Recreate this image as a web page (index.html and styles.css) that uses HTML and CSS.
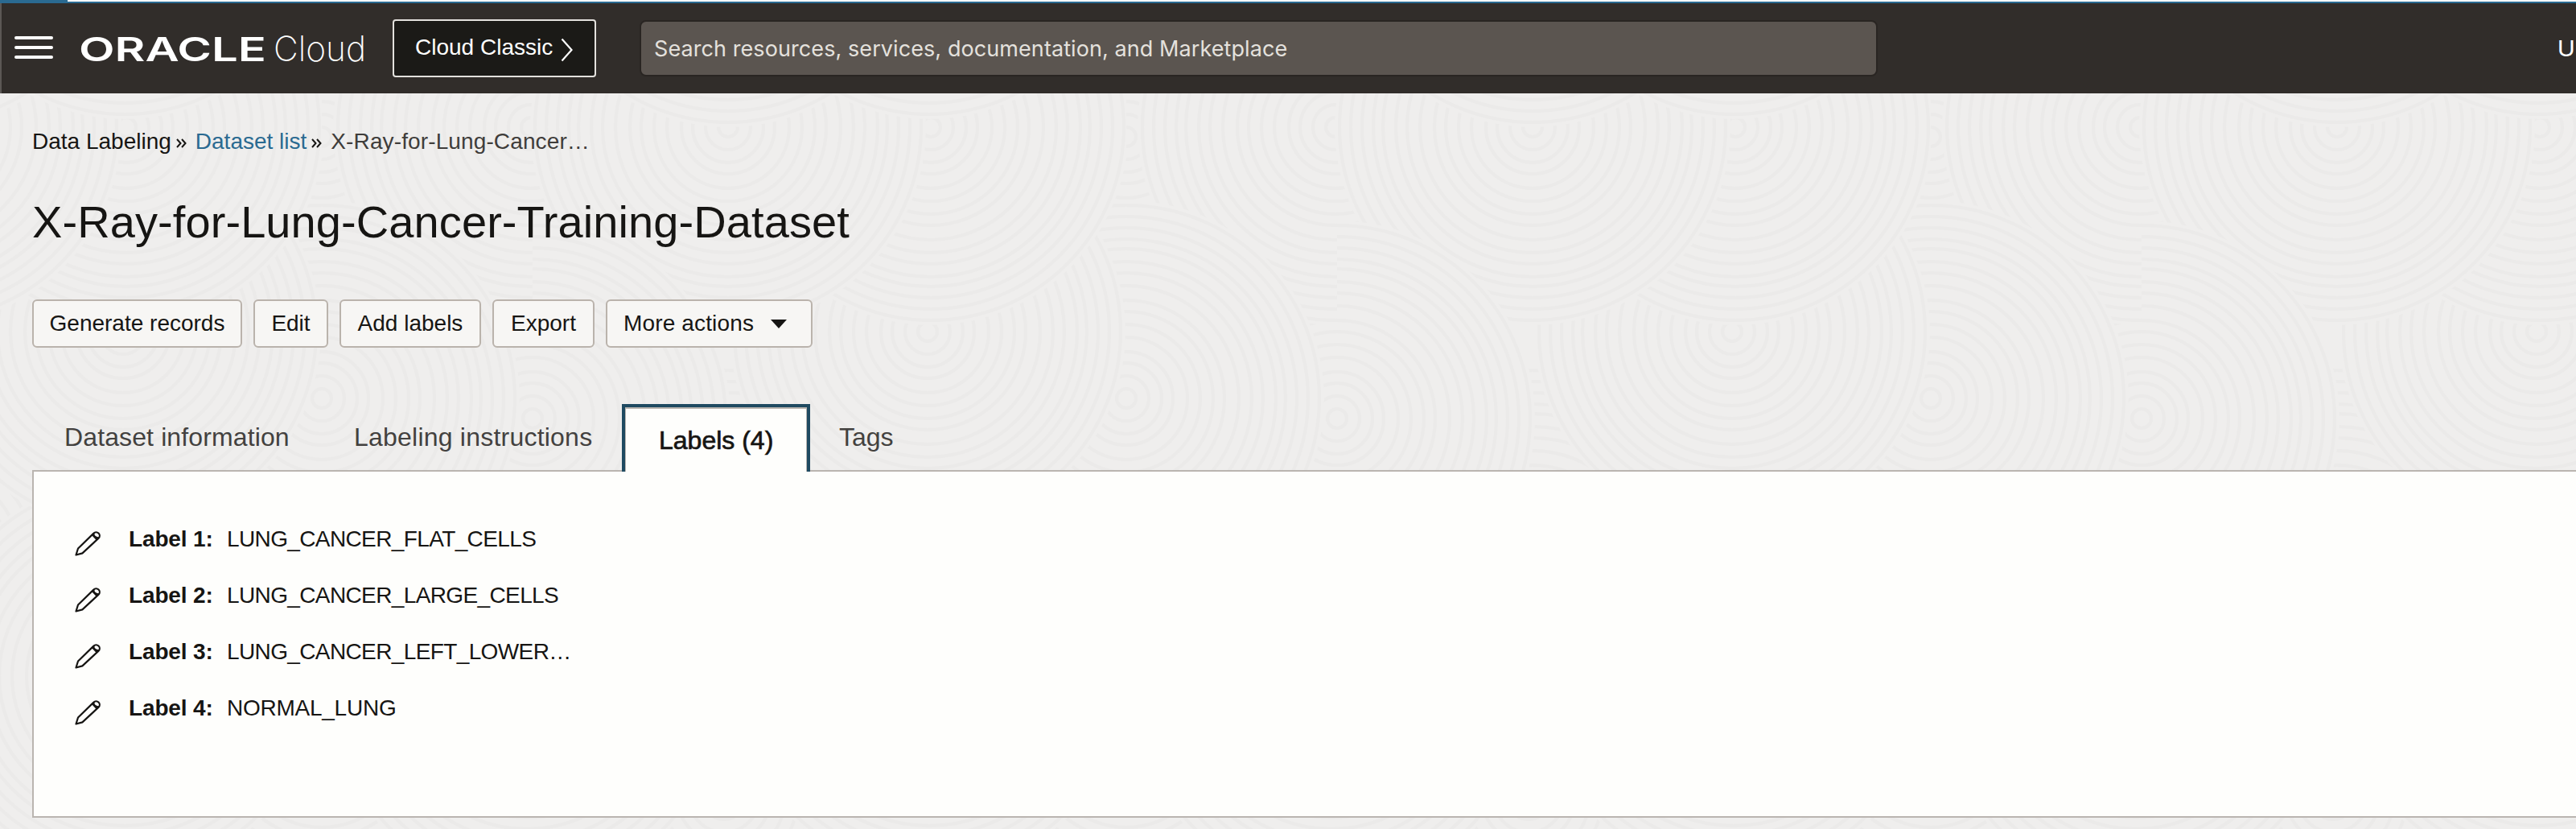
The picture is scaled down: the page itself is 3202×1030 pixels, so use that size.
FILE: index.html
```html
<!DOCTYPE html>
<html lang="en">
<head>
<meta charset="utf-8">
<title>X-Ray-for-Lung-Cancer-Training-Dataset</title>
<link rel="stylesheet" href="styles.css">
</head>
<body>
<svg class="texture" width="3202" height="1030" aria-hidden="true">
  <defs>
    <g id="rings">
      <circle r="246" fill="#efeeed"/>
      <g fill="none" stroke="#ebeae9" stroke-width="4">
        <circle r="12"/><circle r="28"/><circle r="44"/><circle r="58"/><circle r="76"/><circle r="92"/><circle r="108"/><circle r="122"/><circle r="140"/><circle r="156"/><circle r="170"/><circle r="186"/><circle r="198"/><circle r="212"/><circle r="226"/><circle r="240"/>
      </g>
    </g>
    <clipPath id="right"><rect x="0" y="-260" width="260" height="520"/></clipPath>
    <pattern id="sand" x="400" y="0" width="1000" height="1030" patternUnits="userSpaceOnUse">
      <rect width="1000" height="1030" fill="#efeeed"/>
      <use href="#rings" x="0" y="920"/><use href="#rings" x="1000" y="920"/>
      <use href="#rings" x="500" y="990"/>
      <use href="#rings" x="505" y="700"/>
      <use href="#rings" x="755" y="840"/>
      <use href="#rings" x="255" y="860"/>
      <use href="#rings" x="0" y="170"/><use href="#rings" x="1000" y="170"/>
      <use href="#rings" x="1000" y="495"/>
      <use href="#rings" x="753" y="412"/>
      <use href="#rings" x="757" y="158"/>
      <use href="#rings" x="262" y="520"/>
      <use href="#rings" x="260" y="158"/>
      <use href="#rings" x="505" y="158"/>
      <g transform="translate(262 520)"><use href="#rings" clip-path="url(#right)"/></g>
      <use href="#rings" x="0" y="495"/>
      <use href="#rings" x="505" y="-88"/>
      <use href="#rings" x="755" y="-98"/>
    </pattern>
  </defs>
  <rect width="3202" height="1030" fill="url(#sand)"/>
</svg>

<div class="progress"><div class="progress-done"></div></div>

<header class="topbar">
  <button class="menu" aria-label="Menu"><span></span><span></span><span></span></button>
  <svg class="brand" width="360" height="60" viewBox="0 0 360 60" role="img" aria-label="Oracle Cloud">
    <text class="brand-name" x="-2" y="44" textLength="233" lengthAdjust="spacingAndGlyphs">ORACLE</text>
    <text class="brand-product" x="240" y="44" textLength="115" lengthAdjust="spacingAndGlyphs">Cloud</text>
  </svg>
  <button class="classic">Cloud Classic
    <svg width="16" height="30" viewBox="0 0 16 30"><path d="M1.5 1.5 13.5 15 1.5 28.5" fill="none" stroke="#fff" stroke-width="2.2"/></svg>
  </button>
  <div class="search">Search resources, services, documentation, and Marketplace</div>
  <div class="region">U</div>
</header>

<main class="page">
  <nav class="crumbs">
    <span>Data Labeling</span>
    <svg class="sep" width="13" height="12" viewBox="0 0 13 12"><path d="M1 1l4.5 5L1 11M7 1l4.5 5L7 11"/></svg>
    <a>Dataset list</a>
    <svg class="sep" width="13" height="12" viewBox="0 0 13 12"><path d="M1 1l4.5 5L1 11M7 1l4.5 5L7 11"/></svg>
    <span class="current">X-Ray-for-Lung-Cancer…</span>
  </nav>

  <h1>X-Ray-for-Lung-Cancer-Training-Dataset</h1>

  <div class="actions">
    <button class="btn generate">Generate records</button>
    <button class="btn edit">Edit</button>
    <button class="btn add">Add labels</button>
    <button class="btn export">Export</button>
    <button class="btn more">More actions <span class="caret"></span></button>
  </div>

  <div class="tabs">
    <div class="tab info">Dataset information</div>
    <div class="tab instr">Labeling instructions</div>
    <div class="tab active"><span>Labels (4)</span></div>
    <div class="tab tags">Tags</div>
  </div>

  <section class="panel">
    <div class="row">
      <svg class="pencil" viewBox="0 0 32 32"><path d="M1.5 30.5 4 22.5 23.4 3.6A4.3 4.3 0 0 1 29.6 9.6L9.4 28.4Z"/><path d="M21.8 5.2 27.6 11.4M23.4 3.6Q22.6 8.4 29.6 9.6"/></svg>
      <b>Label 1:</b><span>LUNG_CANCER_FLAT_CELLS</span>
    </div>
    <div class="row">
      <svg class="pencil" viewBox="0 0 32 32"><path d="M1.5 30.5 4 22.5 23.4 3.6A4.3 4.3 0 0 1 29.6 9.6L9.4 28.4Z"/><path d="M21.8 5.2 27.6 11.4M23.4 3.6Q22.6 8.4 29.6 9.6"/></svg>
      <b>Label 2:</b><span>LUNG_CANCER_LARGE_CELLS</span>
    </div>
    <div class="row">
      <svg class="pencil" viewBox="0 0 32 32"><path d="M1.5 30.5 4 22.5 23.4 3.6A4.3 4.3 0 0 1 29.6 9.6L9.4 28.4Z"/><path d="M21.8 5.2 27.6 11.4M23.4 3.6Q22.6 8.4 29.6 9.6"/></svg>
      <b>Label 3:</b><span>LUNG_CANCER_LEFT_LOWER…</span>
    </div>
    <div class="row">
      <svg class="pencil" viewBox="0 0 32 32"><path d="M1.5 30.5 4 22.5 23.4 3.6A4.3 4.3 0 0 1 29.6 9.6L9.4 28.4Z"/><path d="M21.8 5.2 27.6 11.4M23.4 3.6Q22.6 8.4 29.6 9.6"/></svg>
      <b>Label 4:</b><span>NORMAL_LUNG</span>
    </div>
  </section>
</main>
</body>
</html>
```
FILE: styles.css
```css
* { box-sizing: border-box; }

body {
  margin: 0;
  width: 3202px;
  height: 1030px;
  overflow: hidden;
  background: #efeeed;
  color: #161513;
  font: 28px/32px "Liberation Sans", Arial, sans-serif;
}

button { margin: 0; font: inherit; color: inherit; white-space: nowrap; }

.texture { position: absolute; inset: 0; z-index: -1; }

.progress { height: 4px; background: #fff; border-bottom: 2px solid #2a6a91; }
.progress-done { width: 84px; height: 2px; background: #2a6a91; }

.topbar {
  display: flex;
  align-items: flex-start;
  height: 112px;
  background: #312d2a;
  border-left: 2px solid #5c5855;
  color: #fff;
}

.menu {
  display: flex;
  flex-direction: column;
  gap: 8px;
  width: 48px;
  margin: 41px 0 0 16px;
  padding: 0;
  border: 0;
  background: none;
}
.menu span { height: 4px; border-radius: 2px; background: #fff; }

.brand { margin: 28px 0 0 34px; fill: #fff; overflow: visible; }
.brand-name { font: 600 41px "Inter", sans-serif; }
.brand-product { font: 250 43px "Inter", sans-serif; }

.classic {
  display: flex;
  align-items: center;
  gap: 10px;
  width: 253px;
  height: 72px;
  margin: 20px 0 0 28px;
  padding: 0 0 2px 26px;
  border: 2px solid #e3e1dd;
  border-radius: 4px;
  background: #1b1a17;
}
.classic svg { margin-top: 5px; }

.search {
  width: 1539px;
  height: 70px;
  margin: 21px 0 0 54px;
  padding-left: 16px;
  border: 2px solid #292522;
  border-radius: 8px;
  background: #5b5550;
  color: #e4e1dd;
  font: 27px/68px "Inter", sans-serif;
  letter-spacing: 0.08px;
}

.region { margin: 38px 0 0 auto; width: 23px; font-size: 30px; line-height: 36px; }

.page { padding: 44px 0 0 40px; }

.crumbs { display: flex; align-items: center; height: 32px; }
.crumbs a { color: #2a6a91; }
.crumbs .current { color: #3f3d3b; letter-spacing: 0.12px; }
.sep { margin: 4px 11px 0 6px; fill: none; stroke: #161513; stroke-width: 2; }

h1 { margin: 52px 0 0; font-size: 56px; line-height: 64px; font-weight: 400; letter-spacing: 0.09px; }

.actions { display: flex; gap: 14px; margin-top: 64px; }
.btn {
  height: 60px;
  padding: 0;
  border: 2px solid #bab3ac;
  border-radius: 6px;
  background: #f7f6f4;
}
.generate { width: 261px; }
.edit { width: 93px; }
.add { width: 176px; }
.export { width: 127px; }
.more { display: flex; align-items: center; gap: 21px; width: 257px; padding-left: 20px; letter-spacing: 0.15px; }
.caret {
  border: 10px solid transparent;
  border-top: 11px solid #161513;
  border-bottom: 0;
}

.tabs {
  display: flex;
  position: relative;
  z-index: 1;
  height: 84px;
  margin-top: 70px;
  font-size: 32px;
  line-height: 82px;
  color: #43413f;
  white-space: nowrap;
}
.info { width: 360px; padding-left: 40px; letter-spacing: 0.12px; }
.instr { width: 373px; padding-left: 40px; letter-spacing: 0.22px; }
.active {
  width: 234px;
  height: 84px;
  border: 4px solid #1f4a61;
  border-bottom: 0;
  background: #fefefc;
  color: #161513;
  font-size: 32px;
  line-height: 79px;
  -webkit-text-stroke: 0.7px #161513;
}
.active span {
  display: block;
  height: 80px;
  padding-left: 41px;
  border: 2px solid #bab5b0;
  border-width: 2px 1px 0;
}
.tags { padding-left: 36px; }

.panel {
  height: 432px;
  margin-top: -2px;
  padding-top: 68px;
  border: 2px solid #bab5b0;
  border-right: 0;
  background: #fefefc;
}
.row { display: flex; height: 70px; line-height: 31px; }
.row b { width: 122px; margin-left: 35px; letter-spacing: -0.15px; }
.row span { letter-spacing: -0.62px; }
.row:last-child span { letter-spacing: -0.25px; }
.pencil {
  width: 32px;
  height: 32px;
  margin: 5px 0 0 51px;
  fill: none;
  stroke: #161513;
  stroke-width: 2.2;
  stroke-linejoin: round;
}
```
